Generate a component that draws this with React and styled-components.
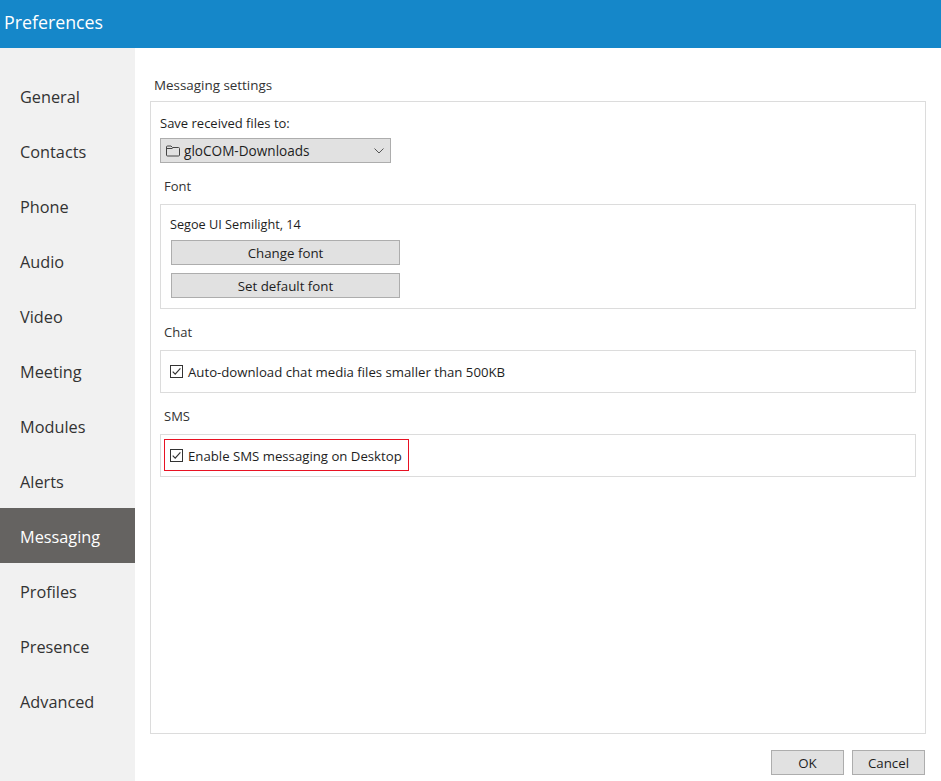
import React from 'react';
import styled, { createGlobalStyle } from 'styled-components';

const Global = createGlobalStyle`
  html, body { margin: 0; padding: 0; background: #fff; }
  body { font-family: "Open Sans", "Noto Sans", sans-serif; color: #1e1e1e; }
`;

const Page = styled.div`
  width: 941px; height: 781px; display: flex; flex-direction: column; overflow: hidden;
`;
const Header = styled.header`
  height: 48px; background: #1587c9; color: #fff; font-size: 17.8px; line-height: 45px; padding-left: 4px; flex: none;
`;
const Body = styled.div`
  flex: 1; display: flex; min-height: 0;
`;
const Sidebar = styled.nav`
  width: 135px; flex: none; background: #f1f1f1; padding-top: 20px; box-sizing: border-box;
`;
const NavItem = styled.div`
  height: 55px; box-sizing: border-box; padding: 3px 0 0 20px; line-height: 52px; font-size: 16.3px;
  color: ${p => (p.$active ? '#fff' : '#333')};
  background: ${p => (p.$active ? '#656361' : 'transparent')};
`;
const Main = styled.main`
  flex: 1; display: flex; flex-direction: column; padding: 28px 15px 0 15px; min-width: 0;
`;
const PageTitle = styled.div`
  font-size: 13.4px; line-height: 18px; padding-left: 4px; height: 25px; color: #333;
`;
const Panel = styled.section`
  height: 633px; box-sizing: border-box; border: 1px solid #dcdcdc; padding: 11px 9px;
`;
const Label = styled.div`
  font-size: 13px; line-height: 20px; color: #1e1e1e;
`;
const Select = styled.div`
  margin-top: 5px; width: 231px; height: 25px; box-sizing: border-box; background: #e1e1e1; border: 1px solid #adadad;
  display: flex; align-items: center; padding: 0 5px; gap: 4px; font-size: 13.6px; color: #1e1e1e;
`;
const Chevron = styled.svg`
  margin-left: auto; margin-right: 1px; display: block;
`;
const SectionTitle = styled.div`
  font-size: 13px; line-height: 18px; padding-left: 4px; color: #333; margin-top: 14px; height: 18px;
`;
const Box = styled.div`
  border: 1px solid #dcdcdc; box-sizing: border-box; margin-top: 9px;
  height: ${p => p.$h}px; display: flex; flex-direction: column; padding-top: ${p => p.$pad || 0}px;
`;
const FontName = styled.div`
  font-size: 12.7px; line-height: 18px; padding-left: 9px; margin-bottom: 7px;
`;
const Button = styled.button`
  font-family: inherit; font-size: 13.3px; color: #1e1e1e; background: #e1e1e1; border: 1px solid #adadad;
  height: 25px; padding: 0; box-sizing: border-box; display: block;
  width: ${p => p.$w}px;
`;
const FontButton = styled(Button)`
  margin-left: 10px; margin-bottom: 8px;
`;
const CheckRow = styled.label`
  display: flex; align-items: center; gap: 5px; font-size: 13.2px; color: #1e1e1e; height: 100%;
  padding-left: 9px;
`;
const Highlight = styled.div`
  width: 245px; height: 32px; box-sizing: border-box; border: 1px solid #e81123; margin: 4px 0 0 3px;
  display: flex; align-items: center; gap: 5px; padding: 1px 0 0 5px; font-size: 13.2px;
`;
const Footer = styled.div`
  display: flex; justify-content: flex-end; gap: 8px; margin-top: 16px; margin-right: 1px;
`;

const CheckBox = () => (
  <svg width="13" height="13" viewBox="0 0 13 13" fill="none" style={{ display: 'block', flex: 'none' }}>
    <rect x="0.5" y="0.5" width="12" height="12" stroke="#333" />
    <path d="M2.7 6.6 5.2 9.2 10.4 3.4" stroke="#333" strokeWidth="1.2" />
  </svg>
);

const Folder = () => (
  <svg width="14" height="12" viewBox="0 0 14 12" fill="none" style={{ display: 'block', flex: 'none' }}>
    <path d="M.5 2A1 1 0 0 1 1.5 1H5L6.5 2.5H12.5A1 1 0 0 1 13.5 3.5V10A1 1 0 0 1 12.5 11H1.5A1 1 0 0 1 .5 10Z" stroke="#444" />
    <path d="M.5 3.5H6.5" stroke="#444" />
  </svg>
);

const items = ['General', 'Contacts', 'Phone', 'Audio', 'Video', 'Meeting', 'Modules', 'Alerts', 'Messaging', 'Profiles', 'Presence', 'Advanced'];

export default function App() {
  return (
    <Page>
      <Global />
      <Header>Preferences</Header>
      <Body>
        <Sidebar>
          {items.map(i => <NavItem key={i} $active={i === 'Messaging'}>{i}</NavItem>)}
        </Sidebar>
        <Main>
          <PageTitle>Messaging settings</PageTitle>
          <Panel>
            <Label>Save received files to:</Label>
            <Select>
              <Folder />
              <span>gloCOM-Downloads</span>
              <Chevron width="10" height="6" viewBox="0 0 10 6" fill="none">
                <path d="M.5.5 5 5 9.5.5" stroke="#555" />
              </Chevron>
            </Select>
            <SectionTitle>Font</SectionTitle>
            <Box $h={105} $pad={10}>
              <FontName>Segoe UI Semilight, 14</FontName>
              <FontButton $w={229}>Change font</FontButton>
              <FontButton $w={229}>Set default font</FontButton>
            </Box>
            <SectionTitle>Chat</SectionTitle>
            <Box $h={43}>
              <CheckRow><CheckBox />Auto-download chat media files smaller than 500KB</CheckRow>
            </Box>
            <SectionTitle>SMS</SectionTitle>
            <Box $h={43}>
              <Highlight><CheckBox />Enable SMS messaging on Desktop</Highlight>
            </Box>
          </Panel>
          <Footer>
            <Button $w={73}>OK</Button>
            <Button $w={73}>Cancel</Button>
          </Footer>
        </Main>
      </Body>
    </Page>
  );
}
